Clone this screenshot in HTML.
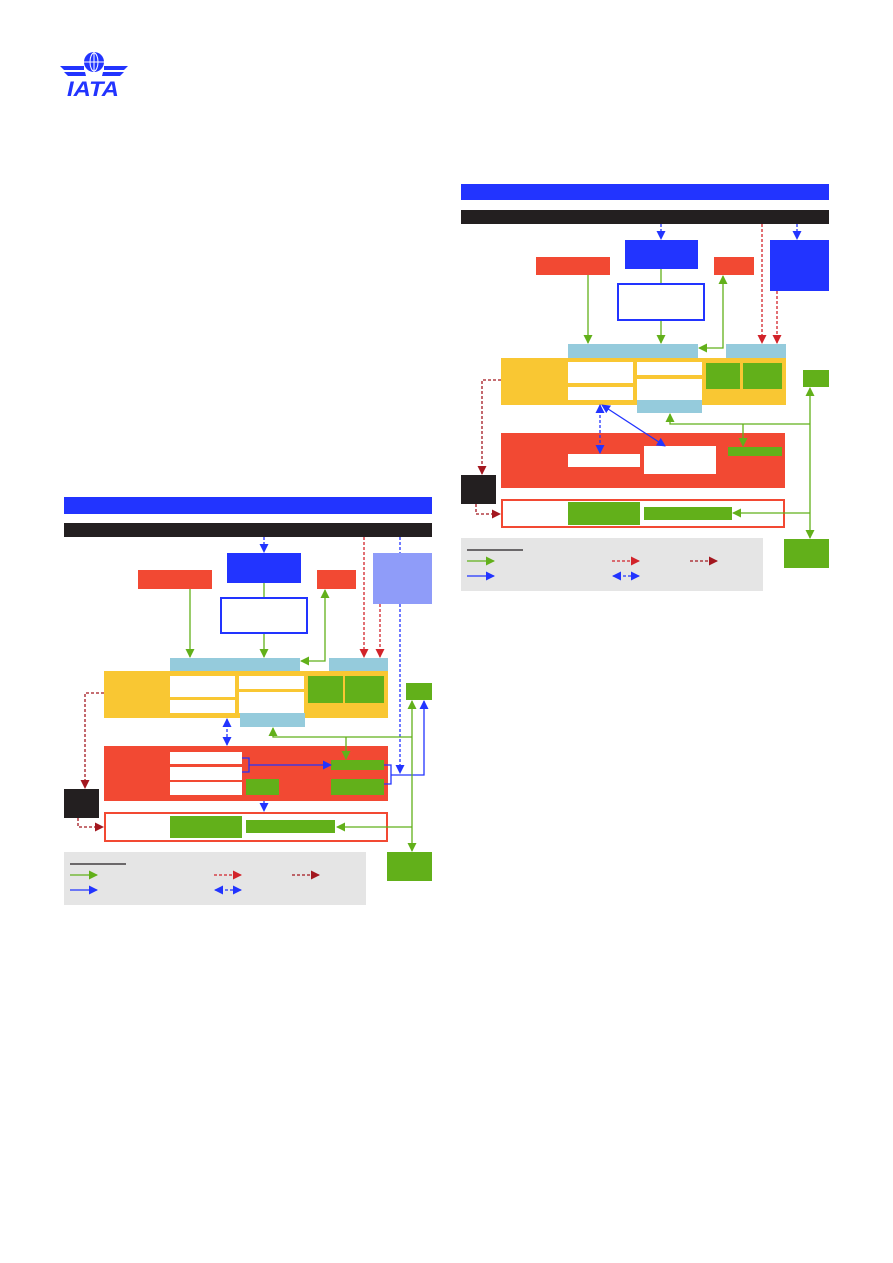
<!DOCTYPE html>
<html><head><meta charset="utf-8"><style>
body{margin:0;background:#fff;width:893px;height:1263px;position:relative;overflow:hidden;font-family:"Liberation Sans",sans-serif}
.b{position:absolute}
.bl{background:#2234ff}.k{background:#231f20}.r{background:#f24933}.y{background:#f9c733}
.lb{background:#95cbdc}.g{background:#62b01a}.w{background:#fff}.lg{background:#e5e5e5}
svg{position:absolute;left:0;top:0}
</style></head><body>
<svg width="893" height="1263" viewBox="0 0 893 1263">
<g fill="#2234ff">
<circle cx="94" cy="62" r="10"/>
<path d="M60 66 L84 66 L84 70 L64 70Z M64 72 L85 72 L86 76 L68 76Z M128 66 L104 66 L104 70 L124 70Z M124 72 L103 72 L102 76 L120 76Z"/>
<text x="67" y="96" font-size="21" font-weight="bold" font-style="italic" font-family="Liberation Sans" textLength="52" lengthAdjust="spacingAndGlyphs">IATA</text>
</g>
<g stroke="#fff" stroke-width="1" fill="none"><ellipse cx="94" cy="62" rx="4" ry="9"/><line x1="84" y1="62" x2="104" y2="62"/><line x1="94" y1="52" x2="94" y2="72"/></g>
</svg>

<div class="b bl" style="left:64px;top:497px;width:368px;height:17px"></div>
<div class="b k" style="left:64px;top:523px;width:368px;height:14px"></div>
<div class="b bl" style="left:227px;top:553px;width:74px;height:30px"></div>
<div class="b r" style="left:138px;top:570px;width:74px;height:19px"></div>
<div class="b r" style="left:317px;top:570px;width:39px;height:19px"></div>
<div class="b" style="left:373px;top:553px;width:59px;height:51px;background:#8f9cf9"></div>
<div class="b" style="left:220px;top:597px;width:84px;height:33px;border:2px solid #2234ff"></div>
<div class="b lb" style="left:170px;top:658px;width:130px;height:13px"></div>
<div class="b lb" style="left:329px;top:658px;width:59px;height:13px"></div>
<div class="b y" style="left:104px;top:671px;width:284px;height:47px"></div>
<div class="b w" style="left:170px;top:676px;width:65px;height:21px"></div>
<div class="b w" style="left:170px;top:700px;width:65px;height:13px"></div>
<div class="b w" style="left:239px;top:676px;width:65px;height:13px"></div>
<div class="b w" style="left:239px;top:692px;width:65px;height:21px"></div>
<div class="b g" style="left:308px;top:676px;width:35px;height:27px"></div>
<div class="b g" style="left:345px;top:676px;width:39px;height:27px"></div>
<div class="b lb" style="left:240px;top:713px;width:65px;height:14px"></div>
<div class="b g" style="left:406px;top:683px;width:26px;height:17px"></div>
<div class="b r" style="left:104px;top:746px;width:284px;height:55px"></div>
<div class="b w" style="left:170px;top:752px;width:72px;height:12px"></div>
<div class="b w" style="left:170px;top:767px;width:72px;height:13px"></div>
<div class="b w" style="left:170px;top:782px;width:72px;height:13px"></div>
<div class="b g" style="left:246px;top:779px;width:33px;height:16px"></div>
<div class="b g" style="left:331px;top:760px;width:53px;height:10px"></div>
<div class="b g" style="left:331px;top:779px;width:53px;height:16px"></div>
<div class="b k" style="left:64px;top:789px;width:35px;height:29px"></div>
<div class="b" style="left:104px;top:812px;width:280px;height:26px;border:2px solid #f24933"></div>
<div class="b g" style="left:170px;top:816px;width:72px;height:22px"></div>
<div class="b g" style="left:246px;top:820px;width:89px;height:13px"></div>
<div class="b lg" style="left:64px;top:852px;width:302px;height:53px"></div>
<div class="b g" style="left:387px;top:852px;width:45px;height:29px"></div>

<div class="b bl" style="left:461px;top:184px;width:368px;height:16px"></div>
<div class="b k" style="left:461px;top:210px;width:368px;height:14px"></div>
<div class="b bl" style="left:625px;top:240px;width:73px;height:29px"></div>
<div class="b r" style="left:536px;top:257px;width:74px;height:18px"></div>
<div class="b r" style="left:714px;top:257px;width:40px;height:18px"></div>
<div class="b bl" style="left:770px;top:240px;width:59px;height:51px"></div>
<div class="b" style="left:617px;top:283px;width:84px;height:34px;border:2px solid #2234ff"></div>
<div class="b lb" style="left:568px;top:344px;width:130px;height:14px"></div>
<div class="b lb" style="left:726px;top:344px;width:60px;height:14px"></div>
<div class="b y" style="left:501px;top:358px;width:285px;height:47px"></div>
<div class="b w" style="left:568px;top:362px;width:65px;height:21px"></div>
<div class="b w" style="left:568px;top:387px;width:65px;height:13px"></div>
<div class="b w" style="left:637px;top:362px;width:65px;height:13px"></div>
<div class="b w" style="left:637px;top:379px;width:65px;height:21px"></div>
<div class="b lb" style="left:637px;top:400px;width:65px;height:13px"></div>
<div class="b g" style="left:706px;top:363px;width:34px;height:26px"></div>
<div class="b g" style="left:743px;top:363px;width:39px;height:26px"></div>
<div class="b g" style="left:803px;top:370px;width:26px;height:17px"></div>
<div class="b r" style="left:501px;top:433px;width:284px;height:55px"></div>
<div class="b w" style="left:568px;top:454px;width:72px;height:13px"></div>
<div class="b w" style="left:644px;top:446px;width:72px;height:28px"></div>
<div class="b g" style="left:728px;top:447px;width:54px;height:9px"></div>
<div class="b k" style="left:461px;top:475px;width:35px;height:29px"></div>
<div class="b" style="left:501px;top:499px;width:280px;height:25px;border:2px solid #f24933"></div>
<div class="b g" style="left:568px;top:502px;width:72px;height:23px"></div>
<div class="b g" style="left:644px;top:507px;width:88px;height:13px"></div>
<div class="b lg" style="left:461px;top:538px;width:302px;height:53px"></div>
<div class="b g" style="left:784px;top:539px;width:45px;height:29px"></div>

<svg width="893" height="1263" viewBox="0 0 893 1263" fill="none" stroke-width="1.3">
<defs>
<marker id="ag" markerWidth="9" markerHeight="9" refX="8" refY="4.5" orient="auto-start-reverse" markerUnits="userSpaceOnUse"><path d="M0 0L9 4.5L0 9Z" fill="#62b01a"/></marker>
<marker id="ab" markerWidth="9" markerHeight="9" refX="8" refY="4.5" orient="auto-start-reverse" markerUnits="userSpaceOnUse"><path d="M0 0L9 4.5L0 9Z" fill="#2234ff"/></marker>
<marker id="ar" markerWidth="9" markerHeight="9" refX="8" refY="4.5" orient="auto-start-reverse" markerUnits="userSpaceOnUse"><path d="M0 0L9 4.5L0 9Z" fill="#d2232a"/></marker>
<marker id="ad" markerWidth="9" markerHeight="9" refX="8" refY="4.5" orient="auto-start-reverse" markerUnits="userSpaceOnUse"><path d="M0 0L9 4.5L0 9Z" fill="#a3171f"/></marker>
</defs>
<g stroke="#2234ff" stroke-dasharray="3,2">
<path d="M264 537V552" marker-end="url(#ab)"/>
<path d="M400 537V553M400 604V773" marker-end="url(#ab)"/>
<path d="M227 719V745" marker-end="url(#ab)" marker-start="url(#ab)"/>
<path d="M264 801V811" marker-end="url(#ab)"/>
</g>
<g stroke="#2234ff"><path d="M242 758H249V772H242M249 765H331" marker-end="url(#ab)"/>
<path d="M384 765H391V784H384M391 775H424V701" marker-end="url(#ab)"/></g>
<g stroke="#d2232a" stroke-dasharray="3,2"><path d="M364 537V657" marker-end="url(#ar)"/><path d="M380 604V657" marker-end="url(#ar)"/></g>
<g stroke="#a3171f" stroke-dasharray="3,2"><path d="M104 693H85V788" marker-end="url(#ad)"/><path d="M78 818V827H103" marker-end="url(#ad)"/></g>
<g stroke="#62b01a">
<path d="M190 589V657" marker-end="url(#ag)"/>
<path d="M264 583V597M264 634V657" marker-end="url(#ag)"/>
<path d="M325 590V661H301" marker-start="url(#ag)" marker-end="url(#ag)"/>
<path d="M412 737H273V728" marker-end="url(#ag)"/>
<path d="M346 737V759" marker-end="url(#ag)"/>
<path d="M412 701V851" marker-start="url(#ag)" marker-end="url(#ag)"/>
<path d="M412 827H337" marker-end="url(#ag)"/>
</g>
<path d="M70 864H126" stroke="#231f20"/>
<path d="M70 875H97" stroke="#62b01a" marker-end="url(#ag)"/>
<path d="M70 890H97" stroke="#2234ff" marker-end="url(#ab)"/>
<path d="M214 875H241" stroke="#d2232a" stroke-dasharray="3,2" marker-end="url(#ar)"/>
<path d="M292 875H319" stroke="#a3171f" stroke-dasharray="3,2" marker-end="url(#ad)"/>
<path d="M215 890H241" stroke="#2234ff" stroke-dasharray="3,2" marker-end="url(#ab)" marker-start="url(#ab)"/>
<g stroke="#2234ff" stroke-dasharray="3,2">
<path d="M661 224V239" marker-end="url(#ab)"/>
<path d="M797 224V239" marker-end="url(#ab)"/>
<path d="M600 405V453" marker-end="url(#ab)" marker-start="url(#ab)"/>
</g>
<path d="M602 405L665 446" stroke="#2234ff" marker-end="url(#ab)" marker-start="url(#ab)"/>
<g stroke="#d2232a" stroke-dasharray="3,2"><path d="M762 224V343" marker-end="url(#ar)"/><path d="M777 291V343" marker-end="url(#ar)"/></g>
<g stroke="#a3171f" stroke-dasharray="3,2"><path d="M501 380H482V474" marker-end="url(#ad)"/><path d="M476 504V514H500" marker-end="url(#ad)"/></g>
<g stroke="#62b01a">
<path d="M588 275V343" marker-end="url(#ag)"/>
<path d="M661 269V283M661 321V343" marker-end="url(#ag)"/>
<path d="M723 276V348H699" marker-start="url(#ag)" marker-end="url(#ag)"/>
<path d="M810 424H670V414" marker-end="url(#ag)"/>
<path d="M743 424V446" marker-end="url(#ag)"/>
<path d="M810 388V538" marker-start="url(#ag)" marker-end="url(#ag)"/>
<path d="M810 513H733" marker-end="url(#ag)"/>
</g>
<path d="M467 550H523" stroke="#231f20"/>
<path d="M467 561H494" stroke="#62b01a" marker-end="url(#ag)"/>
<path d="M467 576H494" stroke="#2234ff" marker-end="url(#ab)"/>
<path d="M612 561H639" stroke="#d2232a" stroke-dasharray="3,2" marker-end="url(#ar)"/>
<path d="M690 561H717" stroke="#a3171f" stroke-dasharray="3,2" marker-end="url(#ad)"/>
<path d="M613 576H639" stroke="#2234ff" stroke-dasharray="3,2" marker-end="url(#ab)" marker-start="url(#ab)"/>
</svg>
</body></html>
